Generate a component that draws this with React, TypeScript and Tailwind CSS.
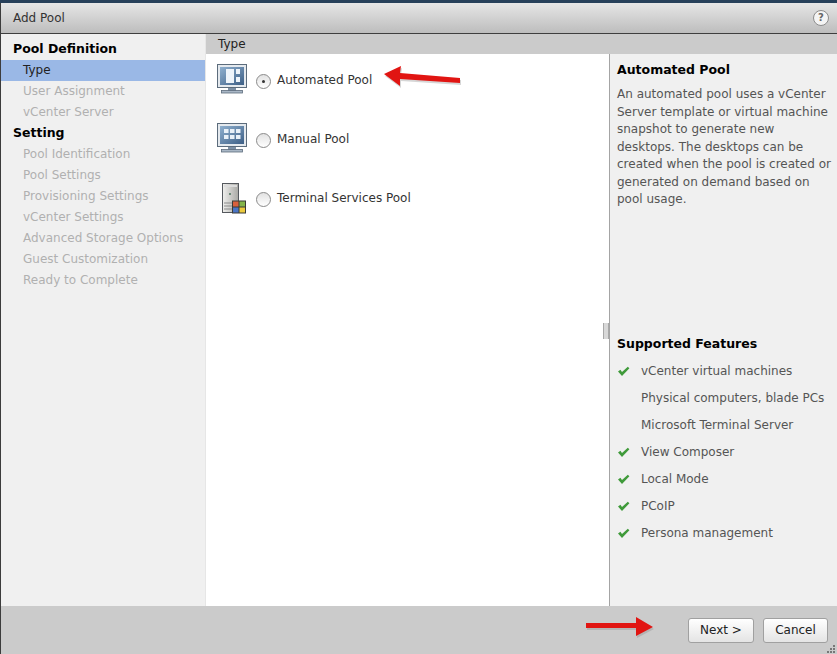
const font = { fontFamily: '"DejaVu Sans", Verdana, sans-serif' };

const steps = [
  { label: 'Pool Definition', kind: 'head' },
  { label: 'Type', kind: 'active' },
  { label: 'User Assignment', kind: 'off' },
  { label: 'vCenter Server', kind: 'off' },
  { label: 'Setting', kind: 'head' },
  { label: 'Pool Identification', kind: 'off' },
  { label: 'Pool Settings', kind: 'off' },
  { label: 'Provisioning Settings', kind: 'off' },
  { label: 'vCenter Settings', kind: 'off' },
  { label: 'Advanced Storage Options', kind: 'off' },
  { label: 'Guest Customization', kind: 'off' },
  { label: 'Ready to Complete', kind: 'off' },
];

const features = [
  { label: 'vCenter virtual machines', ok: true },
  { label: 'Physical computers, blade PCs', ok: false },
  { label: 'Microsoft Terminal Server', ok: false },
  { label: 'View Composer', ok: true },
  { label: 'Local Mode', ok: true },
  { label: 'PCoIP', ok: true },
  { label: 'Persona management', ok: true },
];

const Monitor = ({ manual }: { manual?: boolean }) => (
  <svg width="31" height="30" viewBox="0 0 31 30" className="shrink-0">
    <defs>
      <linearGradient id={manual ? 'scrM' : 'scrA'} x1="0" y1="0" x2="1" y2="1">
        <stop offset="0" stopColor="#8fb0cf" />
        <stop offset="1" stopColor="#3d5f86" />
      </linearGradient>
    </defs>
    <rect x="0.5" y="0.5" width="29" height="23" fill="#e4e9ee" stroke="#5c6c7c" />
    <rect x="3" y="3" width="24" height="18" fill={`url(#${manual ? 'scrM' : 'scrA'})`} />
    {manual ? (
      <g fill="#e8f0f8">
        <rect x="7" y="6" width="4.5" height="4" />
        <rect x="13" y="6" width="4.5" height="4" />
        <rect x="19" y="6" width="4.5" height="4" />
        <rect x="7" y="12" width="4.5" height="4" />
        <rect x="13" y="12" width="4.5" height="4" />
        <rect x="19" y="12" width="4.5" height="4" />
      </g>
    ) : (
      <g fill="#eef4fa">
        <rect x="9" y="5" width="8" height="14" />
        <rect x="19" y="5" width="4" height="5" />
        <rect x="19" y="13" width="4" height="5" />
      </g>
    )}
    <rect x="11" y="24" width="8" height="3" fill="#7d90a5" />
    <rect x="4.5" y="26.5" width="21" height="2.5" fill="#a9b7c6" stroke="#5c6c7c" strokeWidth="0.8" />
  </svg>
);

const Server = () => (
  <svg width="31" height="32" viewBox="0 0 31 32" className="shrink-0">
    <defs>
      <linearGradient id="srv" x1="0" y1="0" x2="1" y2="0">
        <stop offset="0" stopColor="#f0f0ee" />
        <stop offset="1" stopColor="#a8a8a4" />
      </linearGradient>
    </defs>
    <rect x="5.5" y="1.5" width="16" height="29" fill="url(#srv)" stroke="#55595e" />
    <rect x="7" y="3" width="13" height="2" fill="#dcdcdc" />
    <rect x="12" y="11" width="2" height="2" fill="#6c8a78" />
    <path d="M7 21h9M7 24h9M7 27h9" stroke="#8b8b8b" strokeWidth="1" />
    <rect x="15" y="18.5" width="14" height="13" fill="#3a3a36" />
    <rect x="16" y="19.5" width="5.5" height="5" fill="#d9603c" />
    <rect x="22.5" y="19.5" width="5.5" height="5" fill="#84b54a" />
    <rect x="16" y="25.5" width="5.5" height="5" fill="#4a74c4" />
    <rect x="22.5" y="25.5" width="5.5" height="5" fill="#eccb3e" />
  </svg>
);

const Radio = ({ on }: { on?: boolean }) => (
  <span className="flex h-[15px] w-[15px] shrink-0 items-center justify-center rounded-full border border-[#8a8a8a] bg-gradient-to-b from-[#e2e2e2] to-white">
    {on && <span className="h-[3px] w-[3px] rounded-full bg-[#333]" />}
  </span>
);

const PoolRow = ({ icon, label, on }: { icon: React.ReactNode; label: string; on?: boolean }) => (
  <div className="flex h-[59px] items-start pl-[11px]">
    <div className="flex w-[39px] justify-start">{icon}</div>
    <div className="mt-[9px] flex items-center">
      <Radio on={on} />
      <span className="ml-[6px] pb-[2px] text-[12px] leading-[15px] text-[#333]">{label}</span>
    </div>
  </div>
);

const Check = () => (
  <svg width="13" height="11" viewBox="0 0 13 11" className="shrink-0">
    <path d="M1 5.6 L3.4 3.8 L5 6 L10.8 0.8 L12.4 2.2 L5 10 Z" fill="#3f9a3a" />
  </svg>
);

const Arrow = ({ className, d }: { className: string; d: string }) => (
  <svg className={`pointer-events-none absolute ${className}`} viewBox="0 0 90 40" width="90" height="40">
    <path d={d} fill="#8a8a8a" opacity="0.35" transform="translate(1 2)" />
    <path d={d} fill="#e11512" />
  </svg>
);

export default function App() {
  return (
    <div style={font} className="relative flex h-[654px] w-[837px] flex-col overflow-hidden bg-[#cbcbcb] text-[12px]">
      <div className="h-[3px] bg-[#27405a]" />
      <div className="flex min-h-0 flex-1 flex-col border-l border-[#3c3c3c]">
        <header className="flex h-[31px] shrink-0 items-center justify-between border-b border-[#3e3e3e] bg-gradient-to-b from-[#e6e6e6] to-[#bdbdbd] pl-[12px] pr-[8px]">
          <span className="text-[12px] text-[#333]">Add Pool</span>
          <span className="flex h-[16px] w-[16px] items-center justify-center rounded-full border border-[#8c8c8c] bg-[#f4f4f4] text-[10px] font-bold leading-none text-[#666]">?</span>
        </header>

        <div className="flex min-h-0 flex-1">
          <nav className="w-[204px] shrink-0 bg-[#f0f0f0] pt-[5px]">
            {steps.map((s) => (
              <div
                key={s.label}
                className={
                  s.kind === 'head'
                    ? 'flex h-[21px] items-center pl-3 text-[12.5px] font-bold text-black'
                    : s.kind === 'active'
                      ? 'flex h-[21px] items-center bg-[#9ab8e6] pb-[2px] pl-[22px] text-[#222]'
                      : 'flex h-[21px] items-center pb-[2px] pl-[22px] text-[#b0b0b0]'
                }
              >
                {s.label}
              </div>
            ))}
          </nav>

          <div className="flex min-w-0 flex-1 flex-col border-l border-[#e6e6e6] bg-white">
            <div className="flex h-[20px] shrink-0 items-center bg-[#cbcbcb] pl-3 text-[#222]">Type</div>
            <div className="flex min-h-0 flex-1">
              <div className="w-[403px] shrink-0 pt-[10px]">
                <PoolRow icon={<Monitor />} label="Automated Pool" on />
                <PoolRow icon={<Monitor manual />} label="Manual Pool" />
                <PoolRow icon={<Server />} label="Terminal Services Pool" />
              </div>
              <aside className="relative flex min-w-0 flex-1 flex-col border-l border-[#a4a4a4] bg-[#f0f0f0] pl-[7px]">
                <span className="absolute -left-[7px] top-[269px] h-[16px] w-[6px] border-x border-[#a8a8a8] bg-[#d8d8d8]" />
                <h2 className="mt-[8px] text-[12.5px] font-bold leading-[15px] text-black">Automated Pool</h2>
                <p className="mt-[9px] w-[216px] text-[12px] leading-[17.5px] text-[#555]">
                  An automated pool uses a vCenter Server template or virtual machine snapshot to generate new desktops. The desktops can be created when the pool is created or generated on demand based on pool usage.
                </p>
                <h2 className="mt-[127px] text-[12.5px] font-bold leading-[15px] text-black">Supported Features</h2>
                <ul className="mt-[7px]">
                  {features.map((f) => (
                    <li key={f.label} className="flex h-[27px] items-center text-[#555]">
                      <span className="w-[24px] shrink-0">{f.ok && <Check />}</span>
                      <span className="whitespace-nowrap">{f.label}</span>
                    </li>
                  ))}
                </ul>
              </aside>
            </div>
          </div>
        </div>

        <footer className="flex h-[48px] shrink-0 items-center justify-end gap-[9px] bg-[#cbcbcb] pr-[9px]">
          <button className="h-[25px] w-[66px] rounded-[3px] border border-[#a0a0a0] bg-gradient-to-b from-white to-[#e4e4e4] text-[12px] text-[#222]">Next &gt;</button>
          <button className="h-[25px] w-[65px] rounded-[3px] border border-[#a0a0a0] bg-gradient-to-b from-white to-[#e4e4e4] text-[12px] text-[#222]">Cancel</button>
        </footer>
      </div>
      <svg className="absolute bottom-[1px] right-[1px]" width="9" height="9" viewBox="0 0 9 9" fill="#777">
        <rect x="6" y="1" width="2" height="2" />
        <rect x="3" y="4" width="2" height="2" />
        <rect x="6" y="4" width="2" height="2" />
        <rect x="0" y="7" width="2" height="2" />
        <rect x="3" y="7" width="2" height="2" />
        <rect x="6" y="7" width="2" height="2" />
      </svg>

      <Arrow className="left-[380px] top-[57px]" d="M4 17 L21 9 L20 16 L80 21 L80 26 L20 22 L20 29 Z" />
      <Arrow className="left-[580px] top-[606px]" d="M6 17 L56 17 L56 11 L73 21 L56 30 L56 22 L6 22 Z" />
    </div>
  );
}
